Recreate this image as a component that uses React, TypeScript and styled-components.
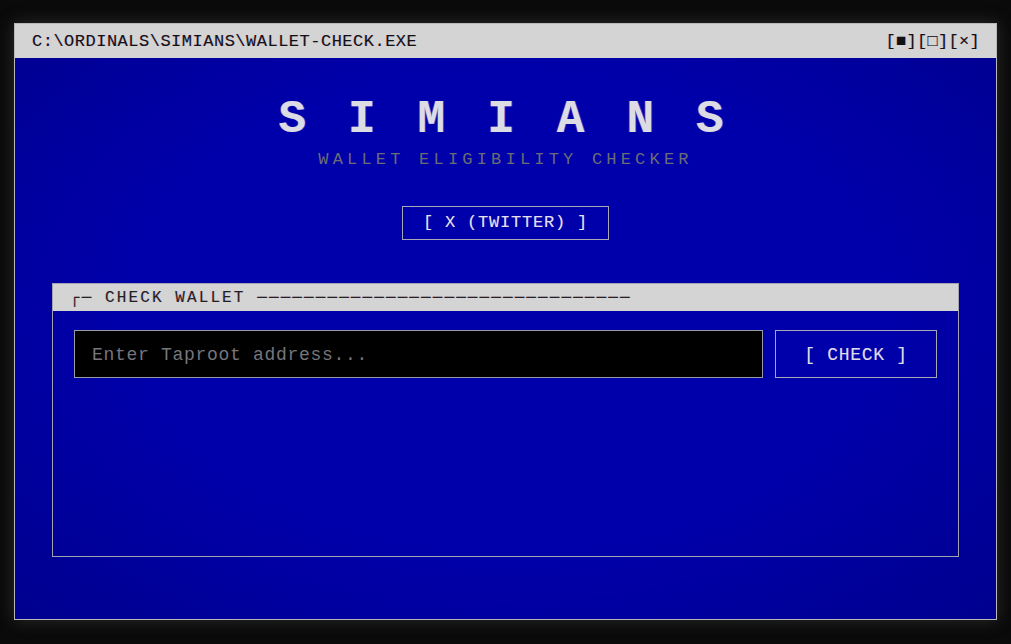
import styled, { createGlobalStyle } from 'styled-components'

const GlobalStyle = createGlobalStyle`
    html, body {
        margin: 0;
        height: 100%;
        background: #0a0a0a;
        font-family: "Liberation Mono", "DejaVu Sans Mono", monospace;
    }
    #root {
        height: 100%;
    }
    * {
        box-sizing: border-box;
    }
`

const FRINGE = '-0.5px 0 rgba(255, 40, 90, 0.3), 0.5px 0 rgba(40, 120, 255, 0.3)'

const Page = styled.div`
    height: 100%;
    padding: 23px 14px 24px;
    display: flex;
`

const Window = styled.div`
    flex: 1;
    display: flex;
    flex-direction: column;
    border: 1px solid #b8b8b8;
    box-shadow: 0 0 16px rgba(110, 110, 110, 0.35);
`

const TitleBar = styled.div`
    height: 34px;
    flex-shrink: 0;
    display: flex;
    align-items: center;
    justify-content: space-between;
    padding: 0 16px 0 17px;
    background: #d4d4d4;
    color: #111;
    font-size: 17px;
    letter-spacing: 0.5px;
    text-shadow: ${FRINGE};
`

const Controls = styled.span`
    letter-spacing: 0.3px;
`

const Body = styled.div`
    flex: 1;
    display: flex;
    flex-direction: column;
    align-items: center;
    background: radial-gradient(ellipse at 50% 45%, #0000aa 55%, #00008e 100%);
`

const Title = styled.h1`
    margin: 39px 0 0;
    padding-left: 33px;
    font-size: 46px;
    line-height: 46px;
    font-weight: 700;
    letter-spacing: 42px;
    color: #dcdce4;
    text-shadow: -1px 0 rgba(255, 60, 120, 0.35), 1px 0 rgba(60, 140, 255, 0.45);
`

const Subtitle = styled.div`
    margin-top: 8px;
    font-size: 17px;
    line-height: 17px;
    letter-spacing: 4.2px;
    color: #6c6c74;
`

const LinkButton = styled.a`
    margin-top: 38px;
    display: block;
    width: 207px;
    height: 34px;
    line-height: 32px;
    text-align: center;
    border: 1px solid #a8a8b4;
    color: #e2e2ee;
    font-size: 17px;
    letter-spacing: 0.8px;
    text-decoration: none;
    text-shadow: ${FRINGE};
`

const Panel = styled.section`
    margin-top: 43px;
    align-self: stretch;
    margin-left: 37px;
    margin-right: 37px;
    height: 274px;
    display: flex;
    flex-direction: column;
    border: 1px solid #a4a4b0;
`

const PanelHeader = styled.div`
    height: 27px;
    flex-shrink: 0;
    display: flex;
    align-items: center;
    padding: 0 17px;
    background: #d4d4d4;
    color: #222;
    font-size: 16px;
    letter-spacing: 2.1px;
    white-space: pre;
    text-shadow: ${FRINGE};
`

const PanelBody = styled.div`
    flex: 1;
    padding: 19px 21px;
`

const Row = styled.div`
    display: flex;
    gap: 12px;
`

const AddressInput = styled.input`
    flex: 1;
    height: 48px;
    padding: 2px 17px 0;
    background: #000;
    border: 1px solid #9a9aa4;
    outline: none;
    color: #ddd;
    font-family: inherit;
    font-size: 18px;
    letter-spacing: 0.7px;

    &::placeholder {
        color: #76767c;
    }
`

const CheckButton = styled.button`
    width: 162px;
    height: 48px;
    padding-top: 2px;
    background: transparent;
    border: 1px solid #a8a8b4;
    color: #dcdcea;
    font-family: inherit;
    font-size: 18px;
    letter-spacing: 0.7px;
    cursor: pointer;
    text-shadow: ${FRINGE};
`

export default function App() {
    return (
        <>
            <GlobalStyle />
            <Page>
                <Window>
                    <TitleBar>
                        <span>C:\ORDINALS\SIMIANS\WALLET-CHECK.EXE</span>
                        <Controls>[■][□][×]</Controls>
                    </TitleBar>
                    <Body>
                        <Title>SIMIANS</Title>
                        <Subtitle>WALLET ELIGIBILITY CHECKER</Subtitle>
                        <LinkButton href="#">[ X (TWITTER) ]</LinkButton>
                        <Panel>
                            <PanelHeader>{'┌─ CHECK WALLET ' + '─'.repeat(32)}</PanelHeader>
                            <PanelBody>
                                <Row>
                                    <AddressInput placeholder="Enter Taproot address..." />
                                    <CheckButton>[ CHECK ]</CheckButton>
                                </Row>
                            </PanelBody>
                        </Panel>
                    </Body>
                </Window>
            </Page>
        </>
    )
}
